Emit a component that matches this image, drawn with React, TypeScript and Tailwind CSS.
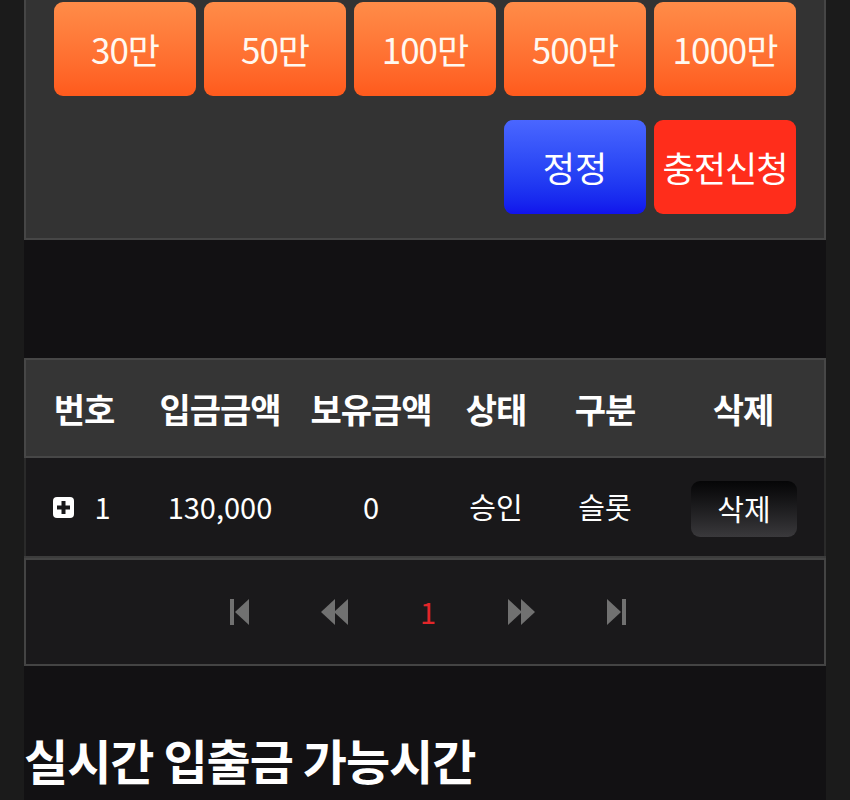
import React from 'react';

const font = { fontFamily: '"Noto Sans CJK KR", "Noto Sans", sans-serif' };

const amounts = ['30만', '50만', '100만', '500만', '1000만'];

const cols = ['w-[116px]', 'w-[156px]', 'w-[146px]', 'w-[104px]', 'w-[114px]', 'w-[162px]'];

const FirstIcon = () => (
  <svg width="20" height="26" viewBox="0 0 20 26" fill="#717171">
    <rect x="0" y="0" width="4" height="26" />
    <polygon points="5,13 19,0 19,26" />
  </svg>
);

const PrevIcon = () => (
  <svg width="28" height="26" viewBox="0 0 28 26" fill="#717171">
    <polygon points="0,13 14,0 14,26" />
    <polygon points="13,13 27,0 27,26" />
  </svg>
);

const NextIcon = () => (
  <svg width="28" height="26" viewBox="0 0 28 26" fill="#717171">
    <polygon points="1,0 15,13 1,26" />
    <polygon points="14,0 28,13 14,26" />
  </svg>
);

const LastIcon = () => (
  <svg width="20" height="26" viewBox="0 0 20 26" fill="#717171">
    <polygon points="1,0 15,13 1,26" />
    <rect x="16" y="0" width="4" height="26" />
  </svg>
);

export default function App() {
  return (
    <div className="min-h-[800px] bg-[#1b1b1b] px-[24px] text-white" style={font}>
      <div className="min-h-[800px] bg-[#121113]">
        {/* Charge panel */}
        <div className="bg-[#333333] border-x-2 border-b-2 border-[#464646] px-[28px] pt-[2px] pb-[24px]">
          <div className="grid grid-cols-5 gap-[8px]">
            {amounts.map((a) => (
              <button
                key={a}
                className="h-[94px] rounded-[9px] bg-gradient-to-b from-[#ff8c48] to-[#ff5a1c] text-[35px] tracking-[-1px] text-[#fff8f0]"
              >
                {a}
              </button>
            ))}
          </div>
          <div className="mt-[24px] grid grid-cols-5 gap-[8px]">
            <div className="col-span-3" />
            <button className="h-[94px] rounded-[9px] bg-gradient-to-b from-[#4a66ff] to-[#1212ec] text-[35px] text-white">
              정정
            </button>
            <button className="h-[94px] whitespace-nowrap rounded-[9px] bg-[#ff2d1b] text-[35px] tracking-[-1px] text-white">
              충전신청
            </button>
          </div>
        </div>

        {/* History table */}
        <div className="mt-[118px] bg-[#0f0f10]">
          <div className="flex h-[100px] items-center border-2 border-[#474747] bg-[#353535] text-[34px] font-bold">
            {['번호', '입금금액', '보유금액', '상태', '구분', '삭제'].map((h, i) => (
              <div key={h} className={`${cols[i]} whitespace-nowrap text-center tracking-[-1px]`}>
                {h}
              </div>
            ))}
          </div>
          <div className="flex h-[98px] items-center border-x-2 border-[#2a2a2a] bg-[#19181a] text-[29px]">
            <div className={`${cols[0]} flex items-center justify-center gap-[20px] pr-[4px]`}>
              <span className="flex h-[21px] w-[21px] items-center justify-center rounded-[4px] bg-white">
                <svg width="13" height="13" viewBox="0 0 13 13" fill="#19181a">
                  <rect x="4.5" y="0" width="4" height="13" />
                  <rect x="0" y="4.5" width="13" height="4" />
                </svg>
              </span>
              <span>1</span>
            </div>
            <div className={`${cols[1]} text-center`}>130,000</div>
            <div className={`${cols[2]} text-center`}>0</div>
            <div className={`${cols[3]} text-center`}>승인</div>
            <div className={`${cols[4]} text-center`}>슬롯</div>
            <div className={`${cols[5]} flex justify-center pl-[2px]`}>
              <button className="mt-[4px] h-[56px] w-[106px] rounded-[9px] bg-gradient-to-b from-[#060607] to-[#3a393c] text-[29px] text-white">
                삭제
              </button>
            </div>
          </div>
          <div className="h-[2px] bg-[#3c3c3c]" />
          <div className="flex h-[108px] items-center justify-center gap-[71px] border-2 border-[#444444] bg-[#1a191b] pl-[6px]">
            <FirstIcon />
            <PrevIcon />
            <span className="text-[29px] text-[#e3262a]">1</span>
            <NextIcon />
            <LastIcon />
          </div>
        </div>

        {/* Heading */}
        <h2 className="mt-[60px] text-[48px] font-bold leading-[66px] tracking-[-1px]">실시간 입출금 가능시간</h2>
      </div>
    </div>
  );
}
